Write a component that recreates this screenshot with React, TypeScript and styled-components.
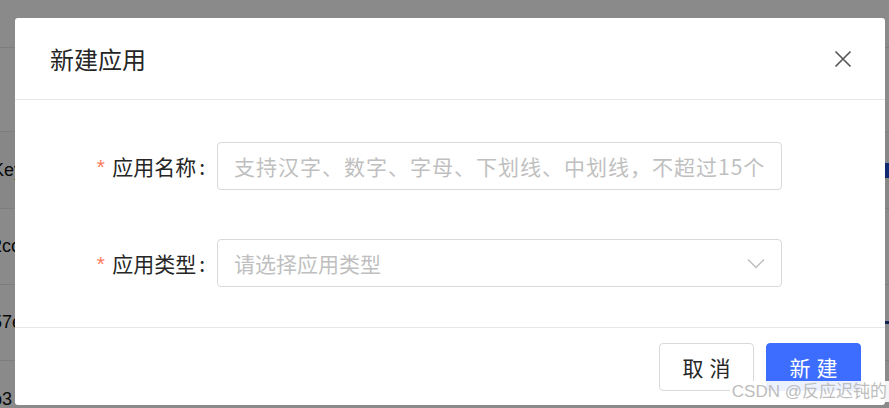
import React from "react";
import styled, { createGlobalStyle } from "styled-components";

const GlobalStyle = createGlobalStyle`
  html, body {
    margin: 0;
    padding: 0;
    background: #ffffff;
    overflow: hidden;
  }
  body {
    font-family: "Noto Sans CJK SC", "Noto Sans", sans-serif;
  }
`;

const Page = styled.div`
  width: 889px;
  height: 408px;
  position: relative;
  overflow: hidden;
  background: #fafafa;
`;

const TopBand = styled.div`
  height: 47px;
  border-bottom: 1px solid #e8e8e8;
  background: #ffffff;
`;

const Row = styled.div<{ $h: number; $header?: boolean }>`
  height: ${(p) => p.$h}px;
  border-bottom: 1px solid #e8e8e8;
  background: ${(p) => (p.$header ? "#fafafa" : "#ffffff")};
  display: flex;
  align-items: center;
  justify-content: space-between;
  font-family: "Liberation Sans", Arial, sans-serif;
  font-size: 18px;
  color: #111;
`;

const CellText = styled.span`
  margin-left: -8px;
`;

const EdgeMark = styled.span<{ $color: string; $h: number }>`
  width: 10px;
  height: ${(p) => p.$h}px;
  background: ${(p) => p.$color};
  margin-right: -6px;
`;

const Mask = styled.div`
  position: absolute;
  inset: 0;
  background: rgba(0, 0, 0, 0.46);
`;

const Wrap = styled.div`
  position: absolute;
  inset: 0;
  padding: 18px 4px 0 15px;
`;

const Modal = styled.div`
  width: 870px;
  background: #ffffff;
  border-radius: 3px;
  display: flex;
  flex-direction: column;
`;

const Header = styled.div`
  height: 81px;
  border-bottom: 1px solid #e8e8e8;
  display: flex;
  align-items: center;
  justify-content: space-between;
  padding: 0 33px 0 35px;
`;

const Title = styled.div`
  font-size: 24px;
  color: #262626;
`;

const Close = styled.button`
  border: 0;
  background: none;
  padding: 0;
  width: 18px;
  height: 18px;
  display: flex;
  color: #595959;
`;

const Body = styled.div`
  padding: 42px 0 40px;
  display: flex;
  flex-direction: column;
  gap: 49px;
`;

const FormRow = styled.div`
  display: flex;
  align-items: center;
  gap: 12px;
`;

const Label = styled.label`
  width: 190px;
  display: flex;
  justify-content: flex-end;
  align-items: center;
  font-size: 21px;
  color: #262626;
`;

const Star = styled.span`
  color: #ff7a5c;
  font-family: "Liberation Mono", monospace;
  font-size: 21px;
  margin-right: 5px;
  margin-top: 6px;
`;

const Colon = styled.span`
  margin-left: 3px;
`;

const Field = styled.div`
  width: 565px;
  height: 48px;
  box-sizing: border-box;
  border: 1px solid #d9d9d9;
  border-radius: 4px;
  display: flex;
  align-items: center;
  justify-content: space-between;
  padding: 0 16px 0 16px;
`;

const Input = styled.input`
  border: 0;
  outline: none;
  flex: 1;
  padding: 0;
  font-family: "Noto Sans CJK SC", "Noto Sans", sans-serif;
  font-size: 21px;
  letter-spacing: 1px;
  color: #262626;
  &::placeholder {
    color: #bfbfbf;
  }
`;

const Placeholder = styled.span`
  font-size: 21px;
  color: #bfbfbf;
`;

const Footer = styled.div`
  border-top: 1px solid #e8e8e8;
  padding: 15px 24px 14px;
  display: flex;
  justify-content: flex-end;
  gap: 12px;
`;

const Button = styled.button<{ $primary?: boolean }>`
  width: 95px;
  height: 48px;
  box-sizing: border-box;
  border-radius: 4px;
  border: 1px solid ${(p) => (p.$primary ? "#3d6dfe" : "#d9d9d9")};
  background: ${(p) => (p.$primary ? "#3d6dfe" : "#ffffff")};
  color: ${(p) => (p.$primary ? "#ffffff" : "#262626")};
  font-family: "Noto Sans CJK SC", "Noto Sans", sans-serif;
  font-size: 21px;
  letter-spacing: 6px;
  padding: 0 0 0 6px;
  cursor: pointer;
`;

const Watermark = styled.div`
  position: absolute;
  right: 0;
  bottom: 6px;
  padding: 0 2px 0 2px;
  height: 21px;
  line-height: 21px;
  background: rgba(255, 255, 255, 0.9);
  font-family: "Liberation Sans", "Noto Sans CJK SC", sans-serif;
  font-size: 17px;
  color: #bdbdbd;
  white-space: nowrap;
`;

const App: React.FC = () => {
  return (
    <>
      <GlobalStyle />
      <Page>
        <TopBand />
        <Row $h={83} />
        <Row $h={76} $header>
          <CellText>Key</CellText>
          <EdgeMark $color="#1f4fd6" $h={15} />
        </Row>
        <Row $h={75}>
          <CellText>2co</CellText>
        </Row>
        <Row $h={75}>
          <CellText>57e</CellText>
          <EdgeMark $color="#1f3fa0" $h={3} />
        </Row>
        <Row $h={76}>
          <CellText>b3</CellText>
        </Row>
        <Mask />
        <Wrap>
          <Modal>
            <Header>
              <Title>新建应用</Title>
              <Close aria-label="close">
                <svg width="18" height="18" viewBox="0 0 18 18">
                  <path
                    d="M1.5 1.5 L16.5 16.5 M16.5 1.5 L1.5 16.5"
                    stroke="currentColor"
                    strokeWidth="1.7"
                    fill="none"
                  />
                </svg>
              </Close>
            </Header>
            <Body>
              <FormRow>
                <Label>
                  <Star>*</Star>应用名称<Colon>:</Colon>
                </Label>
                <Field>
                  <Input placeholder="支持汉字、数字、字母、下划线、中划线，不超过15个" />
                </Field>
              </FormRow>
              <FormRow>
                <Label>
                  <Star>*</Star>应用类型<Colon>:</Colon>
                </Label>
                <Field>
                  <Placeholder>请选择应用类型</Placeholder>
                  <svg width="18" height="11" viewBox="0 0 18 11">
                    <path
                      d="M1 1.5 L9 9.5 L17 1.5"
                      stroke="#bfbfbf"
                      strokeWidth="1.5"
                      fill="none"
                    />
                  </svg>
                </Field>
              </FormRow>
            </Body>
            <Footer>
              <Button>取消</Button>
              <Button $primary>新建</Button>
            </Footer>
          </Modal>
        </Wrap>
        <Watermark>CSDN @反应迟钝的</Watermark>
      </Page>
    </>
  );
};

export default App;
